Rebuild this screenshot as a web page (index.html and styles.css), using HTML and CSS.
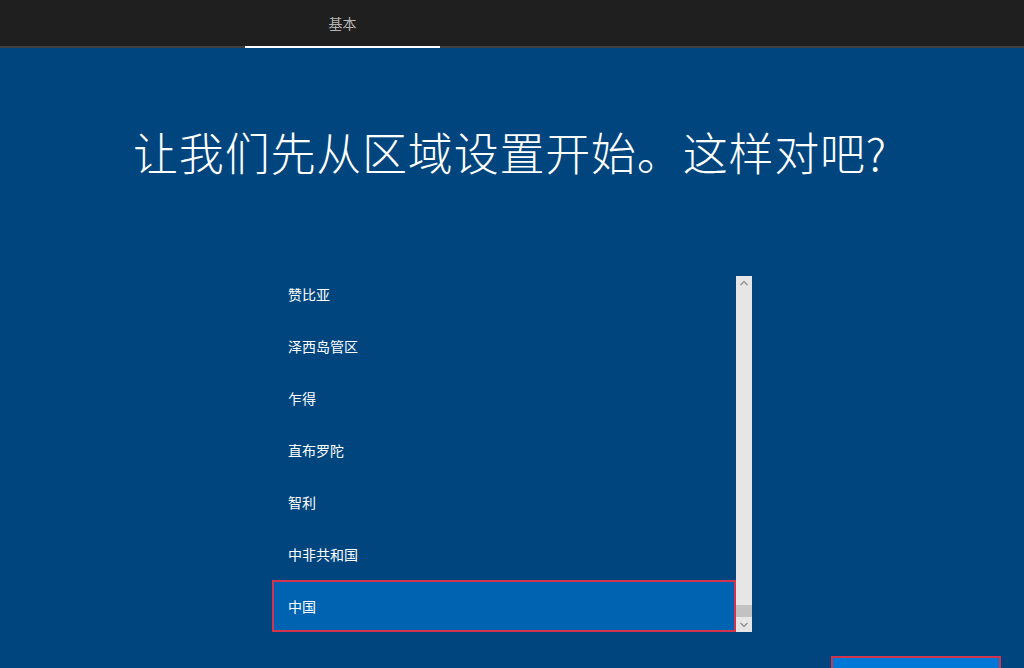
FILE: index.html
```html
<!DOCTYPE html>
<html lang="zh-CN">
<head>
    <meta charset="UTF-8">
    <meta name="viewport" content="width=device-width, initial-scale=1.0">
    <title>区域设置</title>
    <link rel="stylesheet" href="styles.css">
</head>

<body>
    <div class="topbar">
        <div class="tab active">基本</div>
    </div>

    <div class="main">
        <h1 class="title">让我们先从区域设置开始。这样对吧?</h1>

        <div class="picker">
            <div class="list">
                <ul>
                    <li>赞比亚</li>
                    <li>泽西岛管区</li>
                    <li>乍得</li>
                    <li>直布罗陀</li>
                    <li>智利</li>
                    <li>中非共和国</li>
                    <li class="selected">中国</li>
                </ul>
            </div>
            <div class="scrollbar">
                <svg class="arrow" width="16" height="14" viewBox="0 0 16 14">
                    <path d="M4.5 9 L8 5.5 L11.5 9" fill="none" stroke="#8a8a8a" stroke-width="1.2"/>
                </svg>
                <div class="track">
                    <div class="thumb"></div>
                </div>
                <svg class="arrow" width="16" height="14" viewBox="0 0 16 14">
                    <path d="M4.5 5 L8 8.5 L11.5 5" fill="none" stroke="#8a8a8a" stroke-width="1.2"/>
                </svg>
            </div>
        </div>

        <div class="footer">
            <!-- 按钮文字在窗口下方，看不到 -->
            <button class="btn-next" aria-label="是"></button>
        </div>
    </div>
</body>
</html>
```

FILE: styles.css
```css
html, body, ul, li, h1 {
    margin: 0;
    padding: 0;
    list-style: none;
}
* {
    box-sizing: border-box;
}
body {
    width: 1024px;
    height: 668px;
    overflow: hidden;
    background: #00457e;
    font-family: "Noto Sans CJK SC", "Noto Sans", sans-serif;
    color: #fff;
}

/* 顶部标签栏 */
.topbar {
    height: 48px;
    background: #1f1f1f;
    border-bottom: 2px solid #3f3f3f;
    padding-left: 245px;
    display: flex;
}
.tab {
    width: 195px;
    height: 48px;
    margin-bottom: -2px;
    text-align: center;
    font-size: 14px;
    line-height: 48px;
    color: #b4b4b4;
}
.tab.active {
    border-bottom: 2px solid #fff;
    line-height: 46px;
}

/* 标题 */
.main {
    display: flex;
    flex-direction: column;
    align-items: center;
}
.title {
    margin-top: 74px;
    margin-right: 4px;
    font-size: 45px;
    font-weight: 300;
    line-height: 60px;
    letter-spacing: 0.8px;
    white-space: nowrap;
}

/* 国家列表 */
.picker {
    display: flex;
    margin-top: 94px;
    height: 356px;
}
.list {
    width: 464px;
    overflow: hidden;
}
.list ul {
    margin-top: -8px;
}
.list li {
    height: 52px;
    line-height: 52px;
    padding-left: 16px;
    font-size: 14px;
}
.list li.selected {
    background: #0063b1;
    border: 2px solid #d1344c;
    line-height: 48px;
    padding-left: 14px;
}

.scrollbar {
    width: 16px;
    background: #e6e6e6;
    display: flex;
    flex-direction: column;
}
.arrow {
    display: block;
}
.track {
    flex: 1;
    display: flex;
    flex-direction: column;
    justify-content: flex-end;
}
.thumb {
    height: 12px;
    margin-bottom: 1px;
    background: #c2c2c2;
}

/* 底部按钮 */
.footer {
    align-self: stretch;
    display: flex;
    justify-content: flex-end;
    padding-right: 23px;
    margin-top: 24px;
}
.btn-next {
    width: 170px;
    height: 40px;
    background: #0078d7;
    border: 2px solid #d1344c;
}
```
